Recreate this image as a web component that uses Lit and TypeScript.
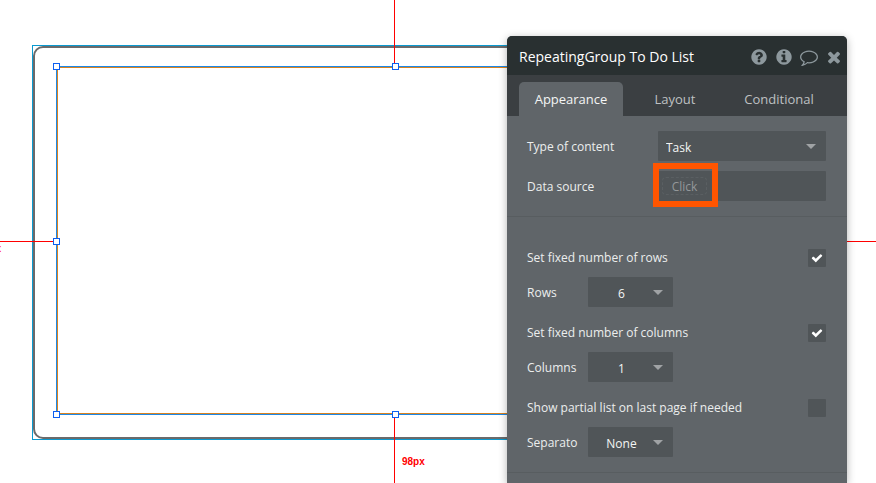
import { LitElement, html, css, svg } from "lit";
import { customElement } from "lit/decorators.js";
import { classMap } from "lit/directives/class-map.js";

const ICONS: Record<string, string> = {
  help: "M1024 1376v-192q0-14-9-23t-23-9h-192q-14 0-23 9t-9 23v192q0 14 9 23t23 9h192q14 0 23-9t9-23zM1280 704q0-88-55.5-163t-138.5-116-170-41q-243 0-371 213-15 24 8 42l132 100q7 6 19 6 16 0 25-12 53-68 86-92 34-24 86-24 48 0 85.5 26t37.5 59q0 38-20 61t-68 45q-63 28-115.5 86.5t-52.5 125.5v36q0 14 9 23t23 9h192q14 0 23-9t9-23q0-19 21.5-49.5t54.5-49.5q32-18 49-28.5t46-35 44.5-48 28-60.5 12.5-81zM1664 896q0 209-103 385.5t-279.5 279.5-385.5 103-385.5-103-279.5-279.5-103-385.5 103-385.5 279.5-279.5 385.5-103 385.5 103 279.5 279.5 103 385.5z",
  info: "M1152 1376v-160q0-14-9-23t-23-9h-96v-512q0-14-9-23t-23-9h-320q-14 0-23 9t-9 23v160q0 14 9 23t23 9h96v320h-96q-14 0-23 9t-9 23v160q0 14 9 23t23 9h448q14 0 23-9t9-23zM1024 480v-160q0-14-9-23t-23-9h-192q-14 0-23 9t-9 23v160q0 14 9 23t23 9h192q14 0 23-9t9-23zM1664 896q0 209-103 385.5t-279.5 279.5-385.5 103-385.5-103-279.5-279.5-103-385.5 103-385.5 279.5-279.5 385.5-103 385.5 103 279.5 279.5 103 385.5z",
  comment: "M896 384q-204 0-381.5 69.5t-282 187.5-104.5 255q0 112 71.5 213.5t201.5 175.5l87 50-27 96q-24 91-70 172 152-63 275-171l43-38 57 6q69 8 130 8 204 0 381.5-69.5t282-187.5 104.5-255-104.5-255-282-187.5-381.5-69.5zM1792 896q0 174-120 321.5t-326 233-450 85.5q-70 0-145-8-198 175-460 242-49 14-114 22h-5q-15 0-27-10.5t-16-27.5v-1q-3-4-.5-12t2-10 4.5-9.5l6-9 7-8.5 8-9q7-8 31-34.5t34.5-38 31-39.5 32.5-51 27-59 26-76q-157-89-247.5-220t-90.5-281q0-174 120-321.5t326-233 450-85.5 450 85.5 326 233 120 321.5z",
  close: "M1490 1322q0 40-28 68l-136 136q-28 28-68 28t-68-28l-294-294-294 294q-28 28-68 28t-68-28l-136-136q-28-28-28-68t28-68l294-294-294-294q-28-28-28-68t28-68l136-136q28-28 68-28t68 28l294 294 294-294q28-28 68-28t68 28l136 136q28 28 28 68t-28 68l-294 294 294 294q28 28 28 68z",
  check: "M1671 566q0 40-28 68l-724 724-136 136q-28 28-68 28t-68-28l-136-136-362-362q-28-28-28-68t28-68l136-136q28-28 68-28t68 28l294 295 656-657q28-28 68-28t68 28l136 136q28 28 28 68z",
};

const icon = (name: string) => html`
  <svg class="icon" viewBox="0 0 1792 1792" aria-hidden="true">
    ${svg`<path d=${ICONS[name]}></path>`}
  </svg>
`;

/* The page being edited: the selected group, its handles and its guides. */
@customElement("design-canvas")
class DesignCanvas extends LitElement {
  static styles = css`
    :host {
      display: block;
      position: absolute;
      inset: 0;
      overflow: hidden;
      font: bold 10px/12px "Liberation Sans", Arial, sans-serif;
      color: #f00;
    }
    .parent {
      box-sizing: border-box;
      position: absolute;
      left: 32px;
      top: 45px;
      width: 726px;
      height: 395px;
      border: 1px solid #0a9ad0;
    }
    .card {
      box-sizing: border-box;
      height: 100%;
      border: 2px solid #6b6b6b;
      border-radius: 10px;
    }
    .selection {
      box-sizing: border-box;
      position: absolute;
      left: 56px;
      top: 66px;
      width: 679px;
      height: 349px;
      border: 1px solid #1e88e5;
      outline: 1px solid #d9821f;
      outline-offset: -2px;
    }
    .guide {
      position: absolute;
      background: #f00;
    }
    .up, .down { left: 394px; width: 1px; }
    .up { top: 0; height: 66px; }
    .down { top: 415px; bottom: 0; }
    .west, .east { top: 241px; height: 1px; }
    .west { left: 0; width: 56px; }
    .east { left: 735px; right: 0; }
    .handle {
      box-sizing: border-box;
      position: absolute;
      width: 7px;
      height: 7px;
      background: #fff;
      border: 1px solid #0d5ff0;
    }
    .start { left: 53px; }
    .middle { left: 392px; }
    .top { top: 63px; }
    .center { top: 238px; }
    .bottom { top: 411px; }
    .distance { position: absolute; }
    .below { left: 402px; top: 456px; }
    .before { right: calc(100% - 1px); top: 243px; }
  `;

  render() {
    return html`
      <div class="parent"><div class="card"></div></div>
      <div class="selection"></div>
      <i class="guide up"></i>
      <i class="guide down"></i>
      <i class="guide west"></i>
      <i class="guide east"></i>
      <i class="handle start top"></i>
      <i class="handle middle top"></i>
      <i class="handle start center"></i>
      <i class="handle start bottom"></i>
      <i class="handle middle bottom"></i>
      <span class="distance below">98px</span>
      <span class="distance before">px</span>
    `;
  }
}

const controlStyles = css`
  :host { display: block; }
  * { box-sizing: border-box; }
  .icon { display: block; width: 100%; height: 100%; fill: currentColor; }
`;

@customElement("pick-field")
class PickField extends LitElement {
  static properties = { label: {}, options: { type: Array }, compact: { type: Boolean } };
  declare label: string;
  declare options: string[];
  declare compact: boolean;

  static styles = [controlStyles, css`
    .row { display: flex; align-items: center; height: 30px; }
    label { flex: 0 0 131px; padding-top: 2px; }
    .compact label { flex-basis: 61px; }
    .box { display: grid; align-items: center; flex: 1; height: 30px; }
    .compact .box { flex: 0 0 85px; }
    select, .caret { grid-area: 1 / 1; }
    select {
      appearance: none;
      width: 100%;
      height: 30px;
      margin: 0;
      padding: 4px 19px 0 8px;
      border: 0;
      border-radius: 1px;
      background: #505558;
      color: #f4f5f5;
      font: inherit;
    }
    .compact select { padding-left: 1px; text-align: center; text-align-last: center; }
    .caret {
      justify-self: end;
      width: 10px;
      height: 5px;
      margin: 1px 10px 0 0;
      background: #a0a3a5;
      clip-path: polygon(0 0, 100% 0, 50% 100%);
      pointer-events: none;
    }
  `];

  render() {
    return html`
      <div class=${classMap({ row: true, compact: this.compact })}>
        <label for="value">${this.label}</label>
        <div class="box">
          <select id="value">${this.options.map((o) => html`<option>${o}</option>`)}</select>
          <span class="caret"></span>
        </div>
      </div>
    `;
  }
}

@customElement("check-field")
class CheckField extends LitElement {
  static properties = { label: {}, checked: { type: Boolean } };
  declare label: string;
  declare checked: boolean;

  static styles = [controlStyles, css`
    .row {
      display: flex;
      align-items: center;
      justify-content: space-between;
      padding: 17px 0 10px;
      line-height: 18px;
    }
    .tick { display: grid; place-items: center; width: 18px; height: 18px; }
    input, .mark { grid-area: 1 / 1; }
    input {
      appearance: none;
      width: 18px;
      height: 18px;
      margin: 0;
      border-radius: 1px;
      background: #505558;
    }
    .mark { width: 12px; height: 12px; color: #fff; pointer-events: none; }
  `];

  render() {
    return html`
      <div class="row">
        <label for="on">${this.label}</label>
        <span class="tick">
          <input id="on" type="checkbox" .checked=${this.checked}
            @change=${(e: Event) => { this.checked = (e.target as HTMLInputElement).checked; }} />
          ${this.checked ? html`<span class="mark">${icon("check")}</span>` : null}
        </span>
      </div>
    `;
  }
}

@customElement("property-editor")
class PropertyEditor extends LitElement {
  static properties = { tab: { state: true } };
  declare tab: string;

  constructor() {
    super();
    this.tab = "Appearance";
  }

  static styles = [controlStyles, css`
    :host {
      position: absolute;
      top: 36px;
      right: 29px;
      bottom: 0;
      width: 340px;
      overflow: hidden;
      border-radius: 5px 5px 0 0;
      background: #606569;
      color: #eceeee;
      font: 12px/18px "Open Sans", "Noto Sans", sans-serif;
    }
    button { margin: 0; padding: 0; border: 0; background: none; color: inherit; font: inherit; }
    header {
      display: flex;
      align-items: center;
      gap: 7px;
      height: 39px;
      padding: 3px 4px 0 12px;
      background: #293031;
    }
    h1 { flex: 1; margin: 0; font-size: 14px; line-height: 20px; font-weight: 400; color: #fff; }
    .tool { width: 18px; height: 18px; color: #8d989d; }
    .tabs {
      display: flex;
      height: 41px;
      padding: 7px 16px 0 12px;
      background: #3b3f42;
    }
    .tab { flex: 1; border-radius: 5px 5px 0 0; color: #bfc1c2; font-size: 13px; }
    .tab.active { background: #606569; color: #f4f5f5; }
    section { padding: 15px 21px 15px 20px; border-bottom: 1px solid #585d60; }
    .source { display: flex; align-items: center; margin-top: 10px; }
    .source label { flex: 0 0 131px; padding-top: 2px; }
    .field {
      position: relative;
      flex: 1;
      display: flex;
      align-items: center;
      height: 30px;
      padding: 0 4px;
      background: #505558;
      border-radius: 1px;
    }
    .field button {
      width: 45px;
      height: 18px;
      padding-top: 1px;
      border: 1px dashed #5a5f62;
      border-radius: 4px;
      line-height: 16px;
      color: #94989a;
    }
    .highlight {
      position: absolute;
      left: -5px;
      top: -8px;
      width: 65px;
      height: 44px;
      border: 6px solid #ff5500;
      pointer-events: none;
    }
  `];

  render() {
    const tools = [["help", "Help"], ["info", "Info"], ["comment", "Comment"], ["close", "Close"]];
    return html`
      <header>
        <h1>RepeatingGroup To Do List</h1>
        ${tools.map(([name, title]) => html`<button class="tool" aria-label=${title}>${icon(name)}</button>`)}
      </header>
      <nav class="tabs">
        ${["Appearance", "Layout", "Conditional"].map((t) => html`
          <button class=${classMap({ tab: true, active: t === this.tab })}
            @click=${() => { this.tab = t; }}>${t}</button>`)}
      </nav>
      <section>
        <pick-field label="Type of content" .options=${["Task"]}></pick-field>
        <div class="source">
          <label for="source">Data source</label>
          <div class="field">
            <button id="source">Click</button>
            <span class="highlight"></span>
          </div>
        </div>
      </section>
      <section>
        <check-field label="Set fixed number of rows" checked></check-field>
        <pick-field compact label="Rows" .options=${["6"]}></pick-field>
        <check-field label="Set fixed number of columns" checked></check-field>
        <pick-field compact label="Columns" .options=${["1"]}></pick-field>
        <check-field label="Show partial list on last page if needed"></check-field>
        <pick-field compact label="Separato" .options=${["None"]}></pick-field>
      </section>
    `;
  }
}

@customElement("app-root")
class AppRoot extends LitElement {
  static styles = css`
    :host {
      display: block;
      position: relative;
      min-height: 100vh;
      overflow: hidden;
      background: #fff;
    }
    .editor { box-shadow: 0 2px 8px rgba(0, 0, 0, 0.3); }
  `;

  render() {
    return html`
      <design-canvas></design-canvas>
      <property-editor class="editor"></property-editor>
    `;
  }
}
